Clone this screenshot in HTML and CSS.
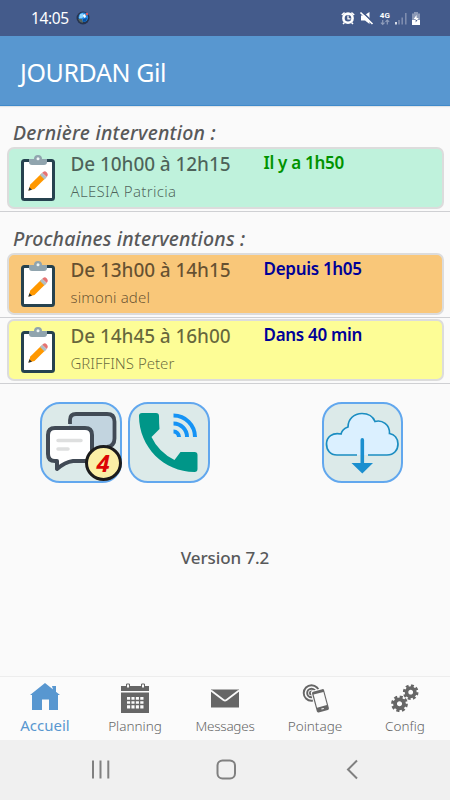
FILE: index.html
```html
<!DOCTYPE html>
<html lang="fr">
<head>
<meta charset="utf-8">
<meta name="viewport" content="width=device-width, initial-scale=1">
<title>JOURDAN Gil</title>
<link rel="stylesheet" href="styles.css">
</head>
<body>
<svg class="defs" aria-hidden="true">
  <symbol id="clipboard" viewBox="0 0 34 46">
    <rect x="1.5" y="5.5" width="31" height="39" rx="2" fill="#fff" stroke="#26424f" stroke-width="3"/>
    <path d="M8 4h5a4 4 0 0 1 8 0h5v3q0 3-3 3H11q-3 0-3-3z" fill="#90a4ae"/>
    <circle cx="17" cy="3.8" r="1.5" fill="#edf5f5"/>
    <path d="M7.5 35.5l1.8-6L20.500 18.500l4.300 4.300L13.500 34z" fill="#ff9800"/>
    <path d="M19 20l2.200-2.200 4.500 4.500-2.200 2.200z" fill="#b0bec5"/>
    <path d="M21.200 17.800q2.300-2.700 4.400-.6 2.300 2.200.1 4.900z" fill="#e57373"/>
    <path d="M7.400 35.700l.9-3.500 2.700 2.600z" fill="#263238"/>
  </symbol>
  <symbol id="gear" viewBox="-8 -8 16 16">
    <circle r="4.200" fill="none" stroke="currentColor" stroke-width="3.600"/>
    <circle r="6.600" fill="none" stroke="currentColor" stroke-width="2.600" stroke-dasharray="2.900 2.284"/>
  </symbol>
</svg>

<header class="status">
  <span class="clock">14:05</span>
  <svg class="app-dot" viewBox="0 0 14 14"><circle cx="7" cy="7" r="6.500" fill="#26344f"/><circle cx="7.300" cy="6.300" r="4.800" fill="#2387df"/><path d="M4 3l3-.8 1 3-2 2-3 0z" fill="#8bd4ff"/><path d="M2 8l4 0 1 4-3-1z" fill="#59645b"/><path d="M7 4l2-1 1 3-2 1z" fill="#fff"/><path d="M7 8l4-1-1 3-3 1z" fill="#0751a5"/><circle cx="11" cy="3" r="1.200" fill="#d9585c"/></svg>
  <svg class="status-icons" viewBox="341 10 80 16">
    <g fill="none" stroke="#fff"><circle cx="348" cy="18.200" r="4.600" fill="#445b8b" stroke-width="2.600"/><path d="M348 15.500v3.300h2.500" stroke-width="1.300"/><path d="M341.800 15l2.800-2.400M354.200 15l-2.800-2.400M344.500 22.500l-1.500 1.500M351.500 22.500l1.500 1.500" stroke-width="1.500"/></g>
    <path d="M361 15.500h3l5.500-3.500v12l-4.500-3.500h-4z" fill="#fff"/>
    <path d="M361.500 11l13 13" stroke="#445b8b" stroke-width="1.700"/><path d="M360.500 12.500l12 11.500" stroke="#fff" stroke-width="1.700"/>
    <text x="379.800" y="18" class="network">4G</text>
    <path d="M382.700 20v4.500m-1.800-1.800l1.800 1.800 1.800-1.800M387.300 24.500V20m-1.800 1.800l1.800-1.800 1.800 1.800" fill="none" stroke="#8f9dbb" stroke-width="1.200"/>
    <path d="M396 22v2.500" stroke="#fff" stroke-width="1.600"/><path d="M399 20v4.500M402.200 17.500v7M405.800 13v11.500" stroke="#8290b1" stroke-width="1.500"/>
    <path d="M414 12h4v1.500h2V20h-8v-6.500h2z" fill="#8c99b6"/><path d="M412 20h8v5h-8z" fill="#fff"/><path d="M416.500 15l-2.800 4h2v3l3-4h-2z" fill="#fff"/><path d="M415.700 20v2.500l1.800-2.500z" fill="#445b8b"/>
  </svg>
</header>

<div class="title-bar"><h1>JOURDAN Gil</h1></div>

<main>
  <section>
    <h2 class="heading-last">Dernière intervention :</h2>
    <div class="row">
      <article class="card green">
        <svg class="clip"><use href="#clipboard"/></svg>
        <div class="visit"><span class="hours">De 10h00 à 12h15</span><span class="person alesia">ALESIA Patricia</span></div>
        <span class="delay ago">Il y a 1h50</span>
      </article>
    </div>
  </section>
  <section>
    <h2 class="heading-next">Prochaines interventions :</h2>
    <div class="row">
      <article class="card orange">
        <svg class="clip"><use href="#clipboard"/></svg>
        <div class="visit"><span class="hours">De 13h00 à 14h15</span><span class="person simoni">simoni adel</span></div>
        <span class="delay">Depuis 1h05</span>
      </article>
    </div>
    <div class="row">
      <article class="card yellow">
        <svg class="clip"><use href="#clipboard"/></svg>
        <div class="visit"><span class="hours">De 14h45 à 16h00</span><span class="person">GRIFFINS Peter</span></div>
        <span class="delay">Dans 40 min</span>
      </article>
    </div>
  </section>

  <div class="actions">
    <button class="action chat" aria-label="Messages">
      <svg viewBox="0 0 81 81">
        <path d="M29 21v-4q0-6 6-6h33q7 0 7 7v20q0 7-7 7H29z" fill="#c2d4df"/>
        <path d="M30 22v-4q0-6 6-6h31q7.500 0 7.500 7.500v17q0 7.500-7.500 8.500" fill="none" stroke="#414a55" stroke-width="3.800"/>
        <path d="M15 26h30q7 0 7 7v19q0 7-7 7H33q-8 1-16 8v-8h-2q-7 0-7-7V33q0-7 7-7z" fill="#fff" stroke="#414a55" stroke-width="4" stroke-linejoin="round"/>
        <path d="M18 38.500h23M18 47h10" stroke="#dedfdf" stroke-width="3.500" stroke-linecap="round"/>
      </svg>
      <span class="badge">4</span>
    </button>
    <button class="action" aria-label="Appeler">
      <svg viewBox="0 0 81 81">
        <path d="M14 11h14q3 0 3 3 0 7 .5 13l-8 8q7 15 23 23l6-8h14q3 0 3 3v14q0 3-3 3C36 70 11 45 11 14q0-3 3-3z" fill="#009688"/>
        <g fill="none" stroke="#1593f5" stroke-width="4"><path d="M45.500 13.500a21.500 21.500 0 0 1 21.500 21.500M45.500 21.500a13.500 13.500 0 0 1 13.500 13.500"/><path d="M45.500 29.500a5.500 5.500 0 0 1 5.500 5.500"/></g>
      </svg>
    </button>
    <button class="action download" aria-label="Synchroniser">
      <svg viewBox="0 0 81 81">
        <path d="M35 53H15C8 53 4.500 48 4.500 42c0-7 6-12 14.500-10 1-4 4-6 7-7 0-8 6-13.500 14-13.500 6 0 11 3 13 8 7-2 15 3 14.500 12 5 1 8.500 5 8.500 10.500 0 6-4 11-11 11z" fill="#dbf0ff"/>
        <path d="M35 53H15C8 53 4.500 48 4.500 42c0-7 6-12 14.500-10 1-4 4-6 7-7 0-8 6-13.500 14-13.500 6 0 11 3 13 8 7-2 15 3 14.500 12 5 1 8.500 5 8.500 10.500 0 6-4 11-11 11H46" fill="none" stroke="#1b8dc1" stroke-width="1.700"/>
        <path d="M38.500 38q0-2 1.800-2t1.800 2v23H51L40.300 71.500 29.500 61h9z" fill="#1b8fcf"/>
      </svg>
    </button>
  </div>
  <p class="version">Version 7.2</p>
</main>

<nav class="tabs">
  <a class="tab active"><svg viewBox="0 0 30 30"><path d="M15 1l15 12h-2v15h-9V17.500h-7V28H2V13H0zM22 4h4v6l-3-2.500z" fill="currentColor"/></svg><span>Accueil</span></a>
  <a class="tab planning"><svg viewBox="0 0 30 30"><path d="M1 4h28v5H1zM1 10.500h28V31H1z" fill="currentColor"/><path d="M6.500 2h3v4h-3zM21.500 2h3v4h-3z" fill="#fafafa" stroke="currentColor"/><path d="M7 15h16.500v11.500H7z" fill="#fbfbfb"/><path d="M10.800 14v13M15.200 14v13M19.600 14v13M6 18.500h18M6 22.500h18" stroke="currentColor" stroke-width="1.300"/></svg><span>Planning</span></a>
  <a class="tab messages"><svg viewBox="0 0 30 30"><path d="M1 7.500h28v18H1z" fill="currentColor"/><path d="M1 8.500l12.500 9.500q1.500 1 3 0L29 8.500" fill="none" stroke="#fafafa" stroke-width="1.800"/></svg><span>Messages</span></a>
  <a class="tab pointage"><svg viewBox="0 0 30 30"><g fill="none" stroke="currentColor"><circle cx="11.500" cy="11" r="7.800" stroke-width="1.900"/><circle cx="11.500" cy="11" r="4.300" stroke-width="2"/></g><circle cx="11.500" cy="11" r="2.500" fill="currentColor"/><g transform="rotate(-15 20.500 18)"><rect x="13" y="7" width="14.500" height="23" rx="2" fill="#fafafa"/><rect x="14" y="8" width="12.500" height="21.500" rx="1.500" fill="currentColor"/><path d="M15.200 11h10.200v13.500h-10.200z" fill="#fafafa"/><path d="M19 27h2.500" stroke="#fafafa"/></g></svg><span>Pointage</span></a>
  <a class="tab config"><svg viewBox="0 0 30 30"><use href="#gear" x="12.700" y="2.200" width="16" height="16"/><use href="#gear" x="1" y="13.300" width="17" height="17"/></svg><span>Config</span></a>
</nav>

<footer class="system">
  <svg viewBox="0 0 450 60"><g fill="none" stroke="#808080" stroke-width="2"><path d="M93 20.500v18M100.500 20.500v18M108.300 20.500v18"/><rect x="217.500" y="20.500" width="17.500" height="18" rx="5"/><path d="M357 20.500l-9 9 9 9"/></g></svg>
</footer>
</body>
</html>
```
FILE: styles.css
```css
* { box-sizing: border-box; }
body {
  margin: 0; width: 450px; height: 800px; overflow: hidden;
  display: flex; flex-direction: column;
  background: #fafafa; color: #58595a;
  font-family: "Noto Sans", sans-serif;
}
svg { display: block; flex: none; }
.defs { width: 0; height: 0; position: absolute; }
h1, h2, p { margin: 0; font-weight: 400; white-space: nowrap; }

.status { height: 36px; flex: none; display: flex; align-items: center; padding: 0 29px 0 31px; background: #445b8b; color: #fff; }
.clock { font-size: 15.500px; line-height: 37px; letter-spacing: -.4px; }
.app-dot { width: 14px; height: 14px; margin-left: 7px; }
.status-icons { width: 80px; height: 16px; margin-left: auto; }
.network { font: 700 8px Roboto, sans-serif; fill: #fff; }

.title-bar { height: 70px; flex: none; padding-left: 20px; background: #5897d0; border-bottom: 1px solid #408aca; box-shadow: 0 1px 1px #e1e4e7; color: #fff; }
h1 { font-size: 25px; line-height: 72px; letter-spacing: -.4px; }

main { flex: 1; }
h2 { height: 41px; padding-left: 13px; font-size: 19.500px; line-height: 53px; font-style: italic; font-weight: 500; letter-spacing: .22px; }
.heading-next { letter-spacing: .16px; }
.row { height: 65px; padding: 0 6.500px; border-bottom: 1px solid #cfd0d3; }
.row + .row { height: 66px; padding-top: 1px; }
.card { height: 62px; display: flex; border: 2px solid #dcdcdc; border-radius: 7px; padding-left: 12px; }
.green { background: #bff2dc; }
.orange { background: #f9c779; }
.yellow { background: #fdfd96; }
.clip { width: 34px; height: 46px; margin-top: 6px; }
.visit { width: 209px; flex: none; padding-left: 16px; display: flex; flex-direction: column; white-space: nowrap; color: rgba(0,0,0,.6); }
.hours { height: 30px; font-size: 19px; line-height: 31px; font-weight: 500; letter-spacing: -.08px; }
.person { font-size: 15px; line-height: 25px; font-weight: 350; }
.alesia { letter-spacing: .32px; }
.simoni { letter-spacing: .15px; }
.delay { font-size: 17px; line-height: 28px; font-weight: 600; letter-spacing: -.3px; color: #000098; white-space: nowrap; }
.ago { color: #009300; }

.actions { display: flex; padding: 17.500px 47px 0 40px; gap: 6.500px; }
.action { width: 81.500px; height: 81.500px; padding: 0; position: relative; border: 2px solid #61a7ee; border-radius: 20px; background: #dceae9; }
.action svg { width: 81px; height: 81px; margin: -2px; }
.download { margin-left: auto; }
.badge { position: absolute; right: -2px; bottom: 0; width: 37px; height: 36px; border: 3px solid #1c1c1c; border-radius: 50%; background: #fbefa6; color: #dc0505; font: italic 700 24px/30px "Noto Sans", sans-serif; text-align: center; }
.version { margin-top: 63px; font-size: 17px; line-height: 24px; font-weight: 500; letter-spacing: -.1px; text-align: center; }

.tabs { height: 64px; flex: none; display: grid; grid-template-columns: repeat(5, 1fr); border-top: 1px solid #ededed; background: #fbfbfb; color: #666; }
.tab { display: flex; flex-direction: column; align-items: center; white-space: nowrap; font-size: 13.500px; font-weight: 350; }
.tab svg { width: 30px; height: 32px; margin-top: 4px; }
.tab span { line-height: 27px; }
.messages { letter-spacing: -.25px; }
.active { color: #5897d0; font-size: 15px; font-weight: 400; }
.active span { line-height: 25px; }
.system { height: 60px; flex: none; background: #f0f0f0; }
.system svg { width: 450px; height: 60px; }
```
